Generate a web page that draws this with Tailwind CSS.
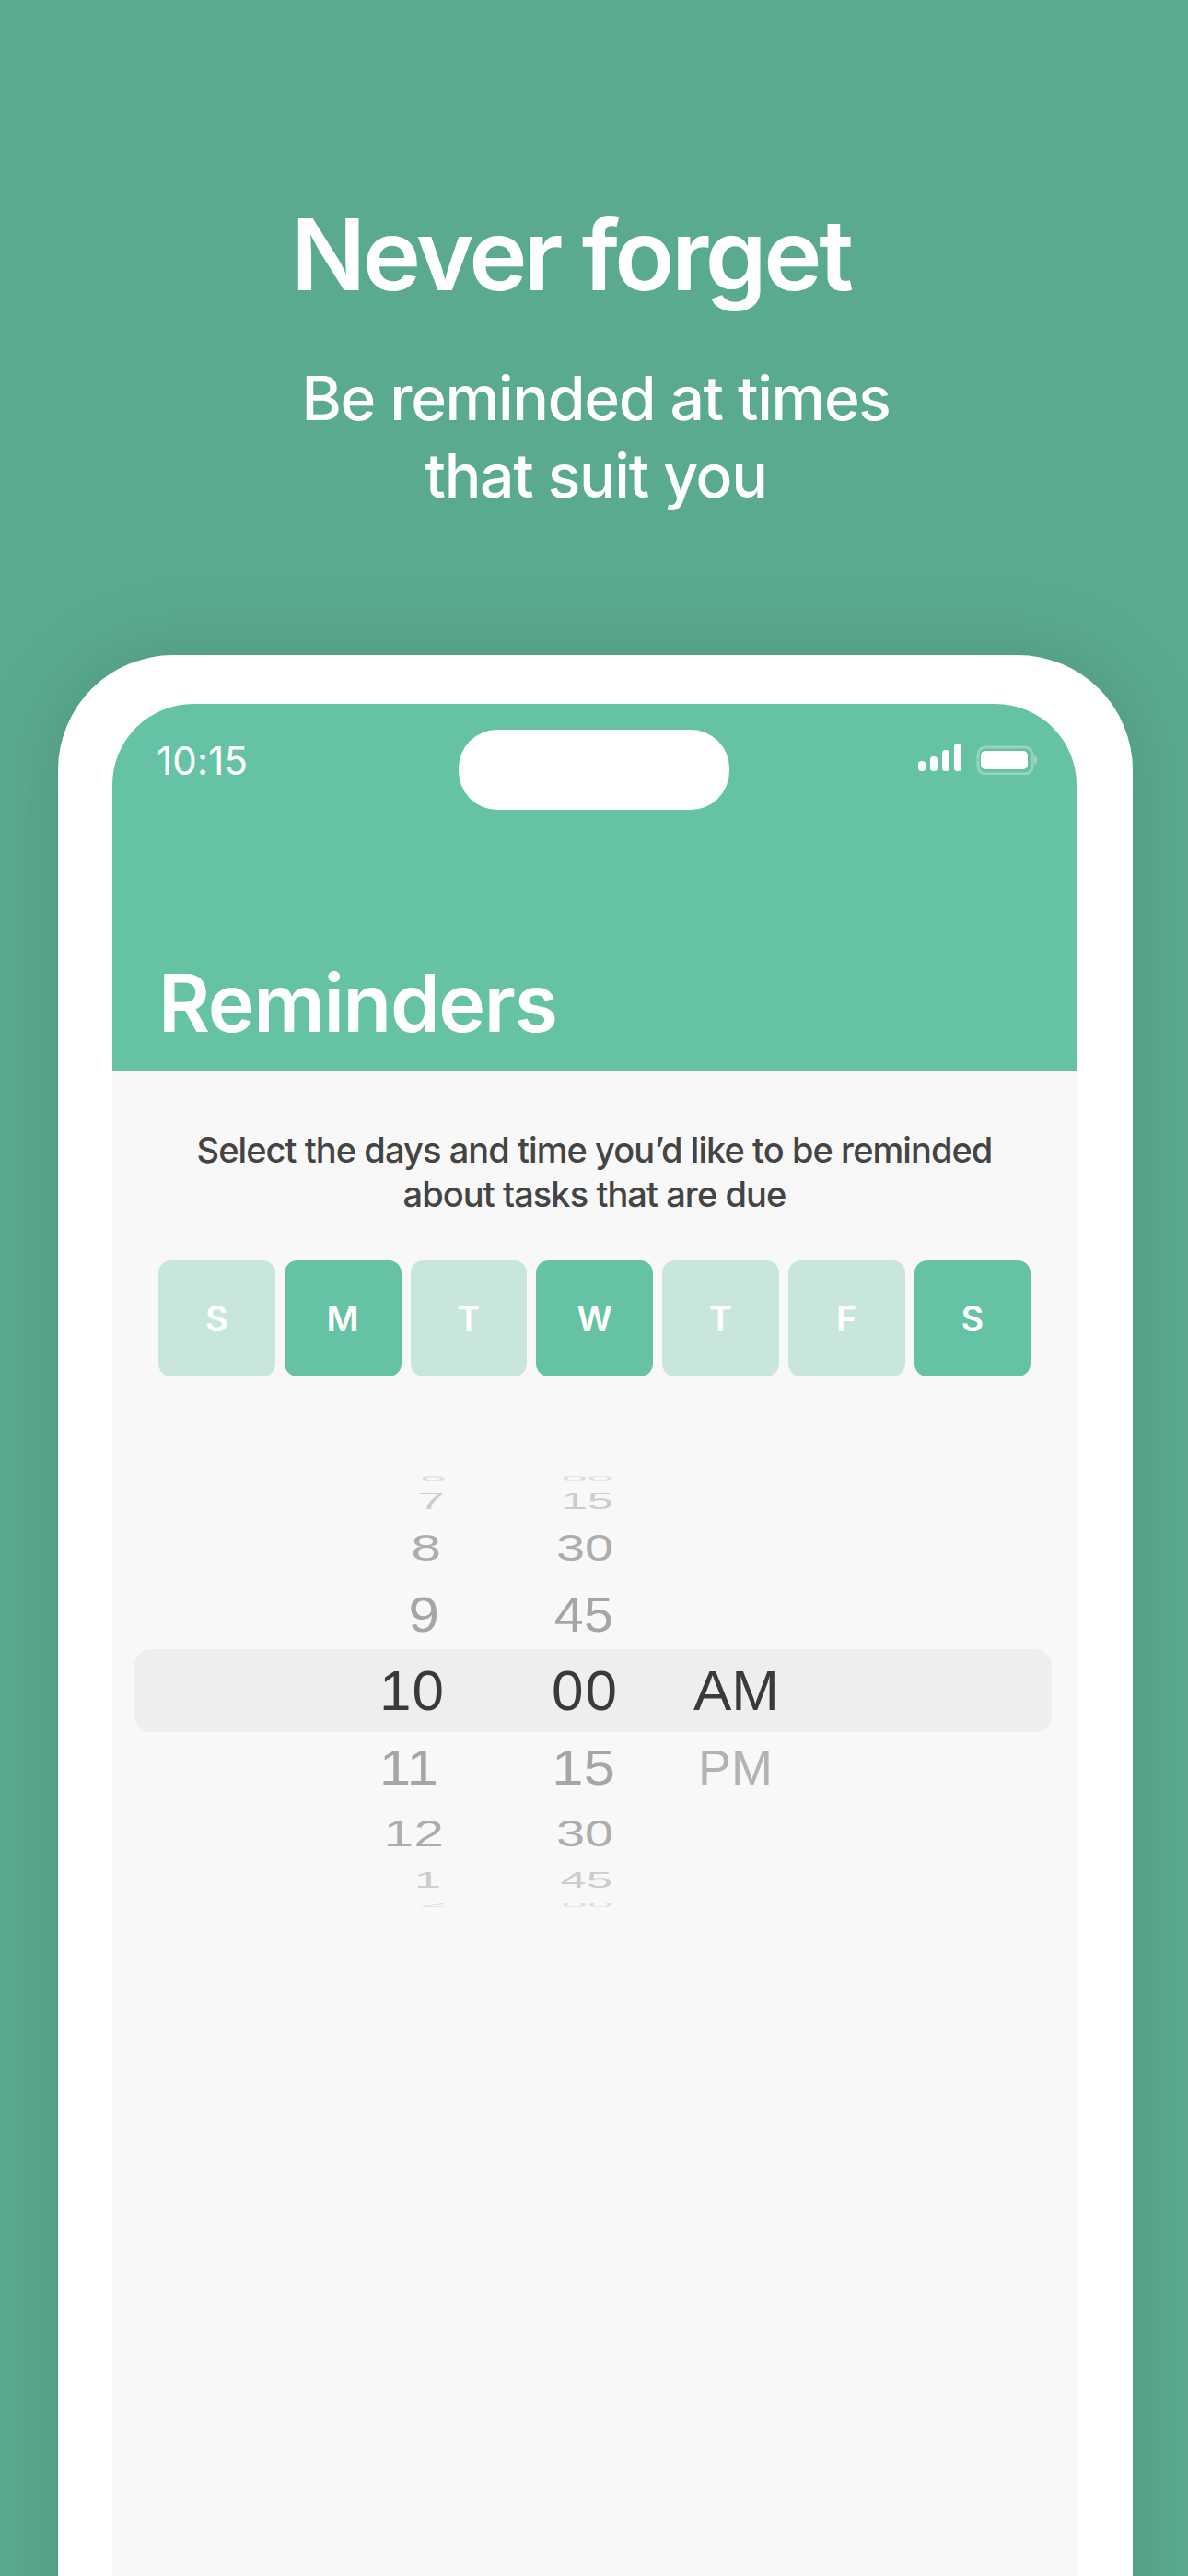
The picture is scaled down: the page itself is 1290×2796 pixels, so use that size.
<!DOCTYPE html>
<html lang="en">
<head>
    <meta charset="UTF-8">
    <title>Reminders</title>
    <meta name="viewport" content="width=device-width,initial-scale=1" />
    <script src="https://cdn.jsdelivr.net/npm/@tailwindcss/browser@4"></script>
</head>
<body class="w-[1290px] h-[2796px] overflow-hidden bg-[#5aaa91] font-['Inter',sans-serif] text-white">

<!-- headline -->
<h1 class="pt-[211px] pl-[316px] h-[390px] text-[107px] leading-[130px] font-semibold tracking-[-3.4px]">Never forget</h1>
<p class="pl-[4px] h-[321px] text-center text-[66px] leading-[84px] font-medium tracking-[-1.3px]">Be reminded at times<br />that suit you</p>

<!-- phone -->
<div class="ml-[63px] w-[1167px] h-[2200px] pt-[53px] pl-[59px] bg-white rounded-t-[125px] shadow-[0_0_90px_rgba(0,0,0,0.13)]">
    <div class="w-[1047px] h-[2100px] bg-[#f8f8f8] rounded-t-[88px] overflow-hidden">

        <!-- header -->
        <div class="relative h-[398px] bg-[#66c2a5]">
            <div class="flex items-start pt-[28px] h-[115px]">
                <span class="ml-[48px] mt-[4px] w-[328px] h-[56px] text-[42px] leading-[60px] tracking-[0.2px]">10:15</span>
                <span class="w-[294px] h-[87px] bg-white rounded-[42px]"></span>
                <svg class="ml-[205px] mt-[15px]" width="130" height="34" viewBox="0 0 130 34" fill="#fff">
                    <rect x="0" y="19" width="8" height="11" rx="3.5" />
                    <rect x="13" y="14" width="8" height="16" rx="3.5" />
                    <rect x="26" y="7" width="8" height="23" rx="3.5" />
                    <rect x="39" y="0" width="8" height="30" rx="3.5" />
                    <rect x="65" y="4" width="59" height="29" rx="8" fill="none" stroke="#fff" stroke-opacity="0.3" stroke-width="3" />
                    <rect x="68" y="8" width="51" height="20" rx="5" />
                    <path d="M126 13c2 .5 3 2.500 3 5s-1 4.500-3 5z" fill-opacity="0.35" />
                </svg>
            </div>
            <h2 class="pl-[50px] pt-[160px] text-[86px] leading-[100px] font-semibold tracking-[-1.3px]">Reminders</h2>
        </div>

        <!-- intro -->
        <p class="pt-[62px] h-[206px] text-center text-[38px] leading-[48px] font-medium text-[#444444] tracking-[-0.93px]">Select the days and time you’d like to be reminded<br />about tasks that are due</p>

        <!-- days -->
        <div class="flex gap-[10px] pl-[50px] text-[38px] font-semibold">
            <div class="flex items-center justify-center w-[126.75px] h-[126px] rounded-[14px] bg-[#c8e6dc]">S</div>
            <div class="flex items-center justify-center w-[126.75px] h-[126px] rounded-[14px] bg-[#66c2a5]">M</div>
            <div class="flex items-center justify-center w-[126.75px] h-[126px] rounded-[14px] bg-[#c8e6dc]">T</div>
            <div class="flex items-center justify-center w-[126.75px] h-[126px] rounded-[14px] bg-[#66c2a5]">W</div>
            <div class="flex items-center justify-center w-[126.75px] h-[126px] rounded-[14px] bg-[#c8e6dc]">T</div>
            <div class="flex items-center justify-center w-[126.75px] h-[126px] rounded-[14px] bg-[#c8e6dc]">F</div>
            <div class="flex items-center justify-center w-[126.75px] h-[126px] rounded-[14px] bg-[#66c2a5]">S</div>
        </div>

        <!-- time picker -->
        <div class="mt-[100px] ml-[24px] w-[996px] font-['Liberation_Sans',sans-serif] text-[62px] leading-none">
            <div class="flex items-center h-[20px] text-[#dddddd]">
                <span class="w-[339px] text-right origin-right scale-x-[.85] scale-y-[.12]">6</span>
                <span class="w-[181px] text-right origin-right scale-x-[.82] scale-y-[.12]">00</span>
            </div>
            <div class="flex items-center h-[30px] text-[#cccccc]">
                <span class="w-[337px] text-right origin-right scale-x-[.85] scale-y-[.43]">7</span>
                <span class="w-[183px] text-right origin-right scale-x-[.82] scale-y-[.43]">15</span>
            </div>
            <div class="flex items-center h-[72px] text-[#adadad]">
                <span class="w-[333px] text-right origin-right scale-x-[.95] scale-y-[.66]">8</span>
                <span class="w-[187px] text-right origin-right scale-x-[.9] scale-y-[.66]">30</span>
            </div>
            <div class="flex items-center h-[74px] text-[#a6a6a6]">
                <span class="w-[331px] text-right origin-right scale-x-[.97] scale-y-[.86]">9</span>
                <span class="w-[189px] text-right origin-right scale-x-[.93] scale-y-[.86]">45</span>
            </div>
            <div class="flex items-center h-[90px] bg-[#eeeeee] rounded-[18px] text-[#3a3a3a]">
                <span class="w-[337px] text-right tracking-[1px]">10</span>
                <span class="w-[189px] text-right tracking-[2px]">00</span>
                <span class="ml-[81px]">AM</span>
            </div>
            <div class="flex items-center h-[78px] text-[#a6a6a6]">
                <span class="w-[330px] text-right origin-right scale-y-[.86]">11</span>
                <span class="w-[192px] text-right origin-right scale-y-[.86]">15</span>
                <span class="ml-[90px] text-[#b3b3b3] origin-left scale-x-[.87] scale-y-[.86]">PM</span>
            </div>
            <div class="flex items-center h-[64px] text-[#adadad]">
                <span class="w-[336px] text-right origin-right scale-x-[.95] scale-y-[.66]">12</span>
                <span class="w-[184px] text-right origin-right scale-x-[.9] scale-y-[.66]">30</span>
            </div>
            <div class="flex items-center h-[38px] text-[#cccccc]">
                <span class="w-[333px] text-right origin-right scale-x-[.85] scale-y-[.39]">1</span>
                <span class="w-[186px] text-right origin-right scale-x-[.82] scale-y-[.39]">45</span>
            </div>
            <div class="flex items-center h-[14px] text-[#dddddd]">
                <span class="w-[339px] text-right origin-right scale-x-[.85] scale-y-[.12]">2</span>
                <span class="w-[181px] text-right origin-right scale-x-[.82] scale-y-[.12]">00</span>
            </div>
        </div>
    </div>
</div>

</body>
</html>
